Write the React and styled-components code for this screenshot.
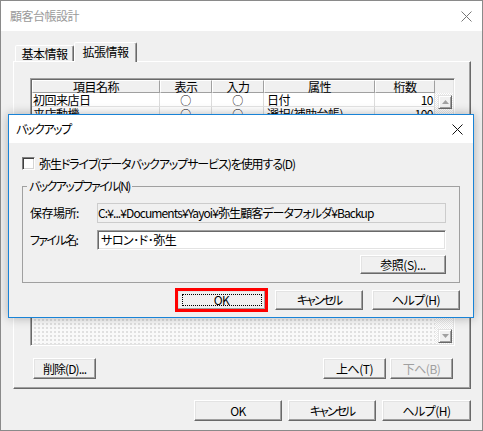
import React from 'react';
import styled, { createGlobalStyle } from 'styled-components';

const GlobalStyle = createGlobalStyle`
  html, body { margin: 0; padding: 0; background: #fff; }
  body {
    font-family: "Noto Sans CJK JP", "Noto Sans", sans-serif;
    font-size: 12px;
    letter-spacing: -0.5px;
    color: #000;
  }
  * { box-sizing: border-box; }
`;

const Window = styled.div`
  position: relative;
  width: 483px;
  height: 431px;
  border: 1px solid #8a8a8a;
  background: #f0f0f0;
  display: flex;
  flex-direction: column;
  overflow: hidden;
`;

const TitleBar = styled.div`
  flex: none;
  height: ${p => p.$h}px;
  background: #fff;
  display: flex;
  align-items: center;
  justify-content: space-between;
  padding: 0 10px 0 ${p => p.$pl}px;
`;

const TitleText = styled.span`
  font-size: 12px;
  line-height: 14px;
  letter-spacing: ${p => p.$ls ?? -0.5}px;
  color: ${p => (p.$inactive ? '#9a9a9a' : '#000')};
  font-feature-settings: "palt";
`;

const Body = styled.div`
  flex: 1;
  display: flex;
  flex-direction: column;
  padding-top: 11px;
`;

const TabStrip = styled.div`
  display: flex;
  align-items: flex-end;
  height: 19px;
  margin-left: 14px;
  position: relative;
  z-index: 1;
`;

const Tab = styled.div`
  width: ${p => p.$w}px;
  height: ${p => (p.$active ? 20 : 16)}px;
  margin-bottom: ${p => (p.$active ? -1 : 0)}px;
  background: #f0f0f0;
  border-style: solid;
  border-width: 1px 1px 0 1px;
  border-color: #fff #696969 transparent #fff;
  box-shadow: inset -1px 0 #a0a0a0;
  border-radius: 2px 2px 0 0;
  display: flex;
  align-items: center;
  justify-content: center;
  font-size: 12px;
  line-height: 14px;
  padding-bottom: ${p => (p.$active ? 1 : 0)}px;
`;

const Panel = styled.div`
  margin: 0 11px 0 12px;
  height: 328px;
  border: 1px solid;
  border-color: #fff #696969 #696969 #fff;
  box-shadow: inset -1px -1px #a0a0a0;
  padding: 16px 15px 9px 16px;
  display: flex;
  flex-direction: column;
`;

const List = styled.div`
  height: 268px;
  flex: none;
  border: 1px solid;
  border-color: #a0a0a0 #fff #fff #a0a0a0;
  box-shadow: inset 1px 1px #696969, inset -1px -1px #e3e3e3;
  padding: 1px;
  display: grid;
  grid-template-columns: 128px 52px 52px 111px 60px 1fr;
  grid-template-rows: 13px 14px 14px 1fr;
`;

const HeadCell = styled.div`
  background: #f0f0f0;
  border: 1px solid;
  border-color: #fff #a0a0a0 #a0a0a0 #fff;
  display: flex;
  align-items: center;
  justify-content: center;
  font-size: 12px;
  line-height: 12px;
  white-space: nowrap;
`;

const HeadFiller = styled.div`
  background: #f0f0f0;
`;

const Cell = styled.div`
  background: #fff;
  border-right: 1px solid #dcdcdc;
  border-bottom: 1px solid #e4e4e4;
  display: flex;
  align-items: center;
  justify-content: ${p => (p.$align === 'right' ? 'flex-end' : p.$align === 'center' ? 'center' : 'flex-start')};
  font-size: ${p => (p.$align === 'center' ? 11 : 12)}px;
  line-height: 12px;
  padding: 0 ${p => (p.$align === 'right' ? 1 : 0)}px 0 ${p => p.$pl ?? 2}px;
  white-space: nowrap;
`;

const EmptyArea = styled.div`
  grid-column: 1 / 6;
  grid-row: 4;
  background-color: #f9f9f9;
  background-image: radial-gradient(circle, #d2d2d2 0.6px, transparent 0.9px);
  background-size: 4px 4px;
  background-position: 1px 1px;
`;

const ScrollBar = styled.div`
  grid-column: 6;
  grid-row: 2 / 5;
  display: flex;
  flex-direction: column;
  justify-content: space-between;
  padding: 2px 1px 1px 3px;
  background: repeating-conic-gradient(#fff 0 25%, #e8e8e8 0 50%) 0 0 / 2px 2px;
`;

const ScrollButton = styled.div`
  width: 14px;
  height: 14px;
  background: #f0f0f0;
  border: 1px solid;
  border-color: #e3e3e3 #696969 #696969 #e3e3e3;
  box-shadow: inset 1px 1px #fff, inset -1px -1px #a0a0a0;
  display: flex;
  align-items: center;
  justify-content: center;
`;

const ActionRow = styled.div`
  display: flex;
  gap: 4px;
  margin: 12px 2px 0 3px;
`;

const Spacer = styled.div`
  flex: 1;
`;

const Button = styled.button`
  position: relative;
  flex: none;
  width: ${p => p.$w}px;
  height: ${p => p.$h || 21}px;
  padding: 0;
  font-family: inherit;
  font-size: 12px;
  line-height: 14px;
  letter-spacing: ${p => p.$ls ?? -0.5}px;
  font-feature-settings: "palt";
  color: ${p => (p.disabled ? '#a0a0a0' : '#000')};
  background: #f0f0f0;
  border: 1px solid;
  border-color: #fff #696969 #696969 #fff;
  box-shadow: inset -1px -1px #a0a0a0, inset 1px 1px #e3e3e3;
  outline: ${p => (p.$highlight ? '3px solid #f00' : 'none')};
  outline-offset: -1px;
  &::after {
    content: '';
    display: ${p => (p.$focus ? 'block' : 'none')};
    position: absolute;
    inset: 3px 3px 3px 4px;
    border: 1px dotted #000;
  }
`;

const Footer = styled.div`
  display: flex;
  justify-content: flex-end;
  gap: 6px;
  margin-top: 11px;
  padding-right: 11px;
`;

const Dialog = styled.div`
  position: absolute;
  left: 7px;
  top: 113px;
  width: 466px;
  height: 204px;
  border: 1px solid #1883d7;
  background: #f0f0f0;
  box-shadow: 0 0 10px rgba(0, 0, 0, 0.28);
  display: flex;
  flex-direction: column;
  z-index: 5;
`;

const DialogBody = styled.div`
  flex: 1;
  display: flex;
  flex-direction: column;
  padding: 14px 13px 7px 13px;
`;

const CheckRow = styled.label`
  display: flex;
  align-items: center;
  gap: 3px;
  height: 13px;
  font-size: 12px;
  line-height: 14px;
  letter-spacing: -1.1px;
  font-feature-settings: "palt";
`;

const CheckBox = styled.span`
  width: 13px;
  height: 13px;
  flex: none;
  margin-right: 1px;
  background: #fff;
  border: 1px solid;
  border-color: #808080 #fff #fff #808080;
  box-shadow: inset 1px 1px #404040, inset -1px -1px #d4d4d4;
`;

const Group = styled.fieldset`
  margin: 9px 0 0;
  padding: 0 13px 8px 7px;
  border: 1px solid #a0a0a0;
  display: flex;
  flex-direction: column;
  min-width: 0;
`;

const Legend = styled.legend`
  margin-left: -3px;
  padding: 0 2px;
  font-size: 12px;
  line-height: 14px;
  height: 14px;
  letter-spacing: -1.6px;
  font-feature-settings: "palt";
`;

const FieldRow = styled.div`
  display: flex;
  align-items: center;
  margin-top: ${p => p.$mt}px;
`;

const FieldLabel = styled.span`
  width: 67px;
  flex: none;
  font-size: 12px;
  line-height: 14px;
  letter-spacing: ${p => p.$ls ?? -0.5}px;
  font-feature-settings: "palt";
`;

const Field = styled.div`
  flex: 1;
  height: 20px;
  display: flex;
  align-items: center;
  font-size: 12px;
  line-height: 14px;
  white-space: nowrap;
  overflow: hidden;
  font-feature-settings: "palt";
  letter-spacing: ${p => p.$ls ?? -0.5}px;
  ${p =>
    p.$readOnly
      ? `
    background: #f0f0f0;
    border: 1px solid #cccccc;
    padding-left: 0;
  `
      : `
    background: #fff;
    border: 1px solid;
    border-color: #a0a0a0 #fff #fff #a0a0a0;
    box-shadow: inset 1px 1px #696969, inset -1px -1px #e3e3e3;
    padding-left: 3px;
  `}
`;

const BrowseRow = styled.div`
  display: flex;
  justify-content: flex-end;
  margin-top: 5px;
`;

const DialogButtons = styled.div`
  display: flex;
  justify-content: flex-end;
  gap: 9px;
  margin-top: 7px;
`;

const CloseIcon = ({ color, size }) => (
  <svg width={size} height={size} viewBox={`0 0 ${size} ${size}`}>
    <path
      d={`M0.5 0.5 L${size - 0.5} ${size - 0.5} M${size - 0.5} 0.5 L0.5 ${size - 0.5}`}
      stroke={color}
      strokeWidth="1"
      fill="none"
    />
  </svg>
);

const Arrow = ({ down }) => (
  <svg width="7" height="4" viewBox="0 0 7 4">
    <path d={down ? 'M0 0 H7 L3.5 4 Z' : 'M3.5 0 L7 4 H0 Z'} fill="#a0a0a0" />
  </svg>
);

const columns = ['項目名称', '表示', '入力', '属性', '桁数'];
const rows = [
  ['初回来店日', '○', '○', '日付', '10'],
  ['来店動機', '○', '○', '選択(補助台帳)', '100'],
];

export default function App() {
  return (
    <>
      <GlobalStyle />
      <Window>
        <TitleBar $h={30} $pl={9}>
          <TitleText $inactive>顧客台帳設計</TitleText>
          <CloseIcon color="#777" size={11} />
        </TitleBar>
        <Body>
          <TabStrip>
            <Tab $w={59}>基本情報</Tab>
            <Tab $w={63} $active>拡張情報</Tab>
          </TabStrip>
          <Panel>
            <List>
              {columns.map(c => (
                <HeadCell key={c}>{c}</HeadCell>
              ))}
              <HeadFiller />
              {rows.map((r, i) =>
                r.map((v, j) => (
                  <Cell
                    key={`${i}-${j}`}
                    $align={j === 1 || j === 2 ? 'center' : j === 4 ? 'right' : 'left'}
                    $pl={j === 0 ? 1 : j === 3 ? 3 : 0}
                  >
                    {v}
                  </Cell>
                ))
              )}
              <EmptyArea />
              <ScrollBar>
                <ScrollButton><Arrow /></ScrollButton>
                <ScrollButton><Arrow down /></ScrollButton>
              </ScrollBar>
            </List>
            <ActionRow>
              <Button $w={63} $ls={-0.9}>削除(D)...</Button>
              <Spacer />
              <Button $w={63}>上へ(T)</Button>
              <Button $w={63} disabled>下へ(B)</Button>
            </ActionRow>
          </Panel>
          <Footer>
            <Button $w={88}>OK</Button>
            <Button $w={88} $ls={-2}>キャンセル</Button>
            <Button $w={89}>ヘルプ(H)</Button>
          </Footer>
        </Body>

        <Dialog>
          <TitleBar $h={28} $pl={7}>
            <TitleText $ls={-1.4}>バックアップ</TitleText>
            <CloseIcon color="#111" size={11} />
          </TitleBar>
          <DialogBody>
            <CheckRow>
              <CheckBox />
              <span>弥生ドライブ(データバックアップサービス)を使用する(D)</span>
            </CheckRow>
            <Group>
              <Legend>バックアップファイル(N)</Legend>
              <FieldRow $mt={10}>
                <FieldLabel>保存場所:</FieldLabel>
                <Field $readOnly $ls={-0.9}>C:¥...¥Documents¥Yayoi¥弥生顧客データフォルダ¥Backup</Field>
              </FieldRow>
              <FieldRow $mt={7}>
                <FieldLabel $ls={-1.6}>ファイル名:</FieldLabel>
                <Field>サロン･ド･弥生</Field>
              </FieldRow>
              <BrowseRow>
                <Button $w={86} $h={19}>参照(S)...</Button>
              </BrowseRow>
            </Group>
            <DialogButtons>
              <Button $w={89} $h={20} $highlight $focus>OK</Button>
              <Button $w={88} $h={20} $ls={-2}>キャンセル</Button>
              <Button $w={88} $h={20}>ヘルプ(H)</Button>
            </DialogButtons>
          </DialogBody>
        </Dialog>
      </Window>
    </>
  );
}
